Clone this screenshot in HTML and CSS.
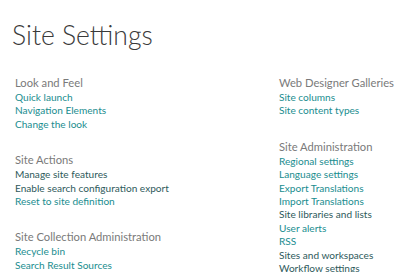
FILE: index.html
```html
<!DOCTYPE html>
<html lang="en">
<head>
    <meta charset="UTF-8" />
    <title>Site Settings</title>
    <link rel="stylesheet" href="styles.css">
</head>
<body>
    <h1 class="page-title">Site Settings</h1>

    <div class="columns">
        <div class="column">
            <div class="group">
                <h3>Look and Feel</h3>
                <a href="#">Quick launch</a>
                <a href="#">Navigation Elements</a>
                <a href="#">Change the look</a>
            </div>
            <div class="group">
                <h3>Site Actions</h3>
                <a href="#" class="visited">Manage site features</a>
                <a href="#" class="visited">Enable search configuration export</a>
                <a href="#">Reset to site definition</a>
            </div>
            <div class="group">
                <h3>Site Collection Administration</h3>
                <a href="#">Recycle bin</a>
                <a href="#">Search Result Sources</a>
            </div>
        </div>

        <div class="column">
            <div class="group">
                <h3>Web Designer Galleries</h3>
                <a href="#">Site columns</a>
                <a href="#">Site content types</a>
            </div>
            <div class="group">
                <h3>Site Administration</h3>
                <a href="#">Regional settings</a>
                <a href="#">Language settings</a>
                <a href="#">Export Translations</a>
                <a href="#">Import Translations</a>
                <a href="#" class="visited">Site libraries and lists</a>
                <a href="#">User alerts</a>
                <a href="#">RSS</a>
                <a href="#" class="visited">Sites and workspaces</a>
                <a href="#" class="visited">Workflow settings</a>
            </div>
        </div>
    </div>
</body>
</html>
```

FILE: styles.css
```css
body {
    margin: 0;
    padding: 0 0 0 15px;
    font-family: Lato, "Open Sans", sans-serif;
    background-color: #ffffff;
    color: #333;
}

.page-title {
    margin: 0 0 0 -3px;
    padding-top: 15px;
    font-size: 26.5px;
    font-weight: 300;
    line-height: 40px;
    color: #3a3a3a;
}

.columns {
    display: flex;
    margin-top: 20px;
}

.column {
    flex: none;
    width: 264px;
}

.column + .column {
    flex: 1;
    width: auto;
    min-width: 0;
}

.group {
    display: flex;
    flex-direction: column;
    align-items: flex-start;
    margin-bottom: 21px;
}

.group h3 {
    margin: 0;
    font-size: 11.2px;
    font-weight: 400;
    line-height: 16px;
    color: #7a7a7a;
    white-space: nowrap;
}

.group a {
    font-size: 10.1px;
    line-height: 13.4px;
    color: #1a8d8f;
    text-decoration: none;
    white-space: nowrap;
}

.group a.visited {
    color: #2e5a5b;
}
```
